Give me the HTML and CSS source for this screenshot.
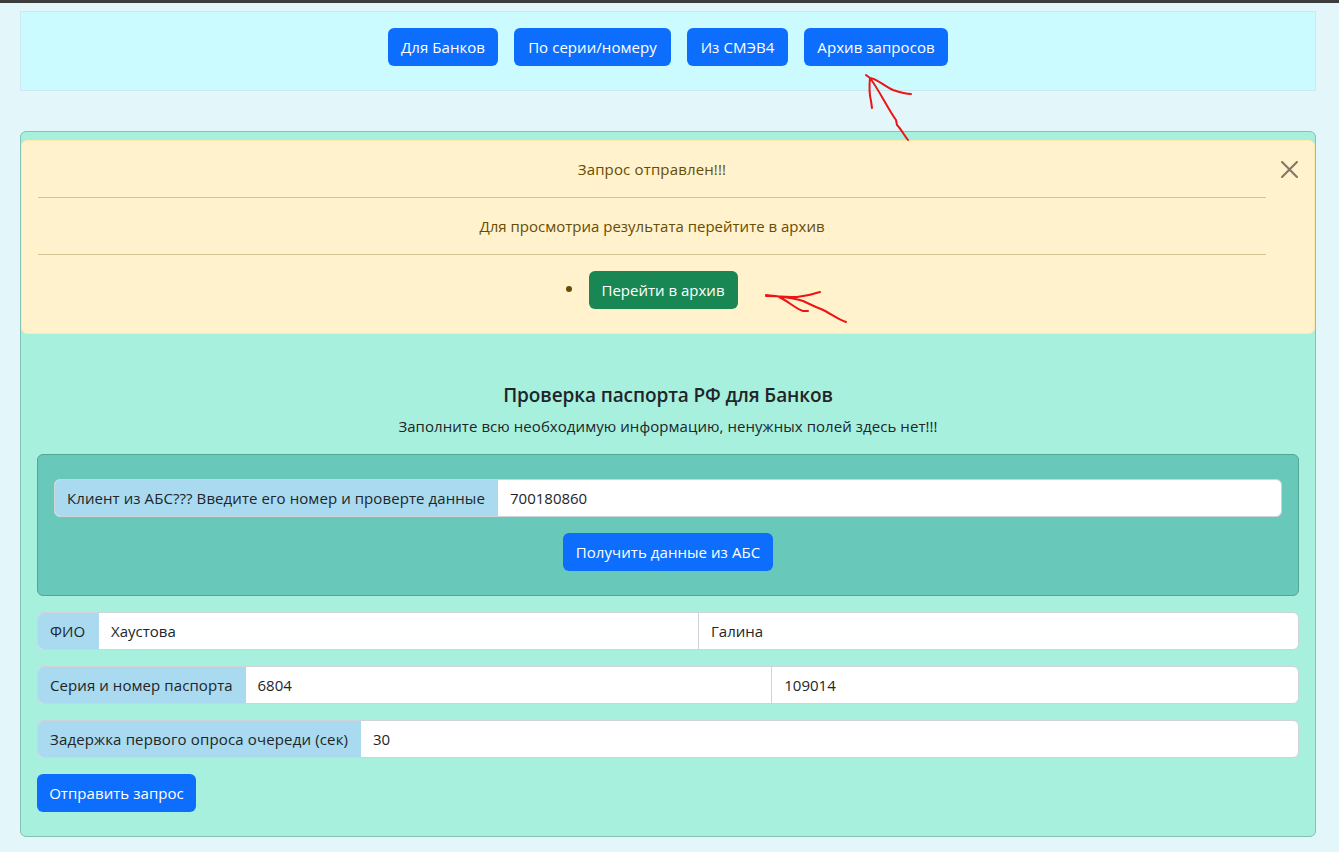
FILE: index.html
```html
<!DOCTYPE html>
<html lang="ru">
<head>
<meta charset="utf-8">
<title>Проверка паспорта РФ</title>
<link rel="stylesheet" href="styles.css">
</head>
<body>
<nav class="topbar">
  <a class="btn w-banks">Для Банков</a>
  <a class="btn w-series">По серии/номеру</a>
  <a class="btn w-smev">Из СМЭВ4</a>
  <a class="btn w-arch">Архив запросов</a>
</nav>
<main class="card">
  <section class="alert">
    <p class="t-sent">Запрос отправлен!!!</p>
    <hr>
    <p>Для просмотриа результата перейтите в архив</p>
    <hr>
    <div class="alert-action"><i class="dot"></i><a class="btn btn-green w-go">Перейти в архив</a></div>
    <svg class="close" viewBox="0 0 16 16"><path d="M1 1l14 14M15 1L1 15"/></svg>
  </section>
  <div class="card-body">
    <h1 class="title">Проверка паспорта РФ для Банков</h1>
    <p class="subtitle">Заполните всю необходимую информацию, ненужных полей здесь нет!!!</p>
    <section class="client">
      <div class="group">
        <label class="label l-client">Клиент из АБС??? Введите его номер и проверте данные</label>
        <div class="field">700180860</div>
      </div>
      <a class="btn w-get">Получить данные из АБС</a>
    </section>
    <div class="group">
      <label class="label l-fio">ФИО</label>
      <div class="field">Хаустова</div>
      <div class="field">Галина</div>
    </div>
    <div class="group">
      <label class="label l-pass">Серия и номер паспорта</label>
      <div class="field">6804</div>
      <div class="field">109014</div>
    </div>
    <div class="group">
      <label class="label l-delay">Задержка первого опроса очереди (сек)</label>
      <div class="field">30</div>
    </div>
    <a class="btn w-send">Отправить запрос</a>
  </div>
</main>
<svg class="marks" width="1339" height="852" viewBox="0 0 1339 852">
  <path d="M866 75l4 3c9 12 17 29 26 42l1 5c4 4 7 10 11 15M870 78c-1 10-1 15 1 23l1 7M870 78c6 0 14 8 23 12 6 2 12 4 18 4"/>
  <path d="M766 296c10 0 20 1 31 1 9-1 17-3 23-5M766 295c16 2 29 3 37 6 7 3 12 6 18 8 9 4 16 10 25 13M779 297c9 4 17 12 24 14h5"/>
</svg>
</body>
</html>
```
FILE: styles.css
```css
* { box-sizing: border-box; }
body {
  margin: 0;
  height: 852px;
  overflow: hidden;
  padding: 8px 23px 0 20px;
  border-top: 3px solid #3c3c3c;
  background: #e3f6fa;
  color: #212529;
  font: 400 15px/24px "Open Sans", "Noto Sans", sans-serif;
}
p, h1 { margin: 0; }
.topbar {
  display: flex;
  justify-content: center;
  gap: 16px;
  height: 80px;
  padding-top: 16px;
  border: 1px solid #cde7ee;
  background: #ccfbff;
}
.btn {
  display: flex;
  justify-content: center;
  align-items: center;
  height: 38px;
  border-radius: 6px;
  background: #0d6efd;
  color: #fff;
  letter-spacing: 0.06px;
  white-space: nowrap;
}
.btn-green { background: #198754; }
.card {
  height: 706px;
  margin-top: 40px;
  padding-top: 8px;
  border: 1px solid #86c2b3;
  border-radius: 6px;
  background: #a7f0de;
}
.alert {
  position: relative;
  height: 194px;
  padding: 16px 48px 0 16px;
  border: 1px solid #ffe9ad;
  border-radius: 6px;
  background: #fff2cd;
  color: #664d03;
  text-align: center;
}
.t-sent { letter-spacing: 0.15px; }
.alert hr {
  height: 1px;
  margin: 16px 0;
  border: 0;
  background: #d4c494;
}
.alert-action {
  display: flex;
  justify-content: center;
  align-items: center;
  padding-right: 1px;
}
.dot {
  width: 6px;
  height: 6px;
  margin: 0 17px 2px 0;
  border-radius: 50%;
  background: #664d03;
}
.w-go { letter-spacing: 0; }
.close {
  position: absolute;
  top: 20px;
  right: 16px;
  width: 17px;
  height: 17px;
  fill: none;
  stroke: #80796a;
  stroke-width: 2;
  stroke-linecap: round;
}
.card-body { padding: 49px 16px 0; }
.title {
  margin-bottom: 7px;
  font-size: 19px;
  font-weight: 600;
  line-height: 24px;
  letter-spacing: -0.1px;
  text-align: center;
}
.subtitle {
  margin-bottom: 16px;
  letter-spacing: 0.06px;
  text-align: center;
}
.client {
  display: flex;
  flex-direction: column;
  align-items: center;
  gap: 16px;
  height: 142px;
  margin-bottom: 16px;
  padding: 24px 16px 0;
  border: 1px solid #53a595;
  border-radius: 6px;
  background: #68c9ba;
}
.group {
  display: flex;
  width: 100%;
  height: 38px;
  margin-bottom: 16px;
  border: 1px solid #ced4da;
  border-radius: 6px;
  background: #fff;
  overflow: hidden;
}
.client .group { margin: 0; }
.label, .field {
  display: flex;
  align-items: center;
  padding-left: 12px;
  white-space: nowrap;
}
.label {
  flex: none;
  background: #a9daef;
  letter-spacing: 0.08px;
}
.field { flex: 1; }
.field + .field { border-left: 1px solid #ced4da; }
.l-client { width: 443px; }
.l-fio { width: 61px; }
.l-pass { width: 207.5px; }
.l-delay { width: 323px; letter-spacing: 0.15px; }
.w-banks { width: 110px; }
.w-series { width: 157px; }
.w-smev { width: 101px; }
.w-arch { width: 144px; }
.w-go { width: 149px; }
.w-get { width: 210px; }
.w-send { width: 159px; }
.marks {
  position: absolute;
  top: 0;
  left: 0;
  fill: none;
  stroke: #ed1414;
  stroke-width: 2;
  stroke-linecap: round;
  stroke-linejoin: round;
  pointer-events: none;
}
```
